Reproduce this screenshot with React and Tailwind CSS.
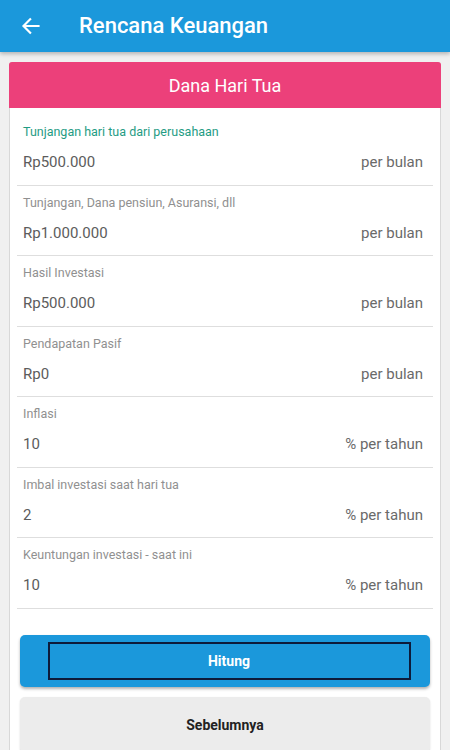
import React from 'react';

const rows = [
    { label: 'Tunjangan hari tua dari perusahaan', value: 'Rp500.000', unit: 'per bulan', active: true },
    { label: 'Tunjangan, Dana pensiun, Asuransi, dll', value: 'Rp1.000.000', unit: 'per bulan' },
    { label: 'Hasil Investasi', value: 'Rp500.000', unit: 'per bulan' },
    { label: 'Pendapatan Pasif', value: 'Rp0', unit: 'per bulan' },
    { label: 'Inflasi', value: '10', unit: '% per tahun' },
    { label: 'Imbal investasi saat hari tua', value: '2', unit: '% per tahun' },
    { label: 'Keuntungan investasi - saat ini', value: '10', unit: '% per tahun' },
];

const Field = ({ label, value, unit, active, tight }) => (
    <div className={`border-b border-[#dedede] pl-[6px] pr-[10px] pt-[9px] ${tight ? 'pb-[12px]' : 'pb-[13px]'}`}>
        <div className={`text-[12.5px] leading-[16px] ${active ? 'text-[#1f9c84]' : 'text-[#909090]'}`}>{label}</div>
        <div className="mt-[12px] flex justify-between text-[15px] leading-[20px]">
            <span className="text-[#5c5c5c]">{value}</span>
            <span className="text-[#6a6a6a]">{unit}</span>
        </div>
    </div>
);

const App = () => {
    return (
        <div className="w-[450px] h-[750px] overflow-hidden bg-[#f0f0f0]" style={{ fontFamily: 'Roboto, "Noto Sans", sans-serif' }}>
            <div className="h-[52px] bg-[#1b98db] flex items-center shadow-[0_2px_4px_rgba(0,0,0,0.25)] relative z-10">
                <svg className="ml-[21px]" width="20" height="20" viewBox="0 0 24 24" fill="none" stroke="white" strokeWidth="2.6" strokeLinecap="square">
                    <path d="M21 12H4M11 4l-8 8 8 8" />
                </svg>
                <h1 className="ml-[38px] text-white text-[22px] font-medium leading-none">Rencana Keuangan</h1>
            </div>
            <div className="mx-[9px] mt-[10px] bg-white border border-[#d8d8d8] rounded-t-[3px] h-[700px]">
                <div className="h-[46px] -mx-px -mt-px bg-[#ec407a] rounded-t-[3px] flex items-center justify-center text-white text-[18px]">
                    Dana Hari Tua
                </div>
                <div className="px-[7px] pt-[7px]">
                    {rows.map((r, i) => (
                        <Field key={r.label} {...r} tight={i % 2 === 1} />
                    ))}
                </div>
                <div className="px-[10px] pt-[26px] flex flex-col gap-[10px]">
                    <button className="h-[52px] w-full bg-[#1b98db] rounded-[5px] shadow-[0_2px_3px_rgba(0,0,0,0.3)] flex items-center justify-center">
                        <span className="ml-[8px] w-[363px] h-[38px] border-2 border-[#0d1b3a] flex items-center justify-center text-white text-[14px] font-bold">
                            Hitung
                        </span>
                    </button>
                    <button className="h-[56px] w-full bg-[#ececec] rounded-[5px] shadow-[0_1px_2px_rgba(0,0,0,0.15)] flex items-center justify-center text-[#222] text-[14px] font-bold">
                        Sebelumnya
                    </button>
                </div>
            </div>
        </div>
    );
};

export default App;
